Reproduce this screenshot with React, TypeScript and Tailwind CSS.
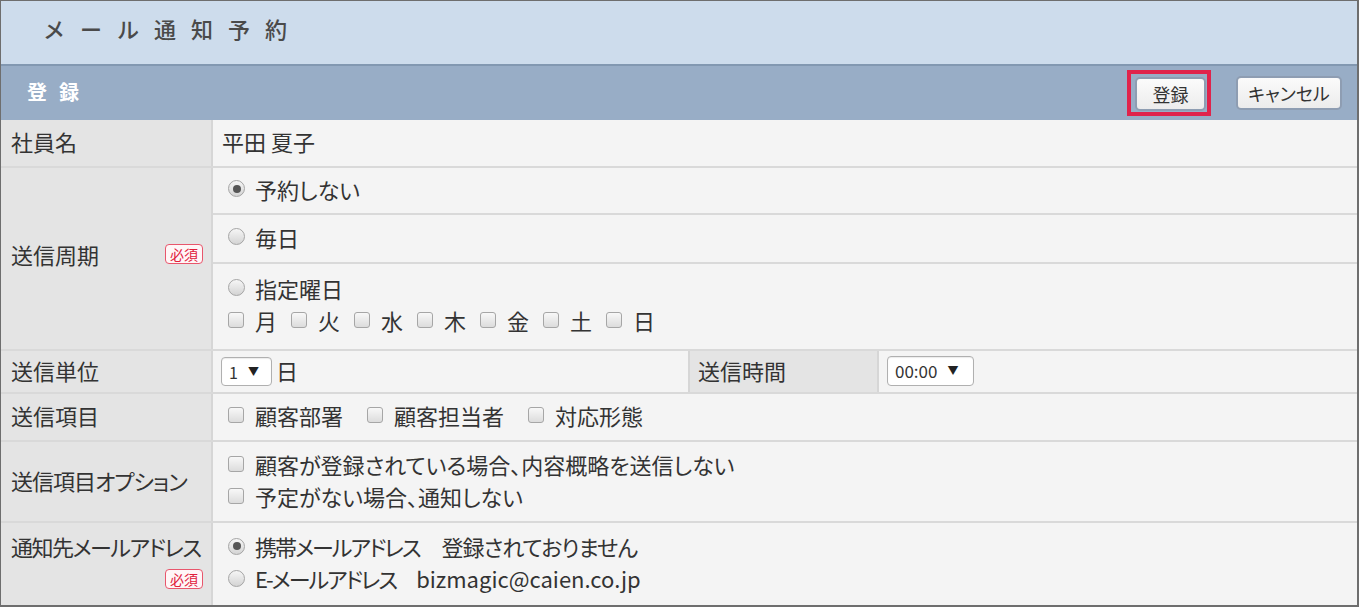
import type { ReactNode } from 'react';

function Radio({ checked = false }: { checked?: boolean }) {
  return (
    <span className="inline-flex w-[17px] h-[17px] flex-none items-center justify-center rounded-full border border-[#a5a5a5] bg-linear-to-b from-[#f6f6f6] to-[#d4d4d4]">
      {checked && <span className="w-[8px] h-[8px] rounded-full bg-[#555]" />}
    </span>
  );
}

function Check() {
  return (
    <span className="inline-block w-[16px] h-[16px] flex-none rounded-[3px] border border-[#a6a6a6] bg-linear-to-b from-[#f8f8f8] to-[#dcdcdc]" />
  );
}

function Badge() {
  return (
    <span className="inline-flex items-center h-[20px] px-[4px] rounded-[4px] border border-[#e8566c] bg-[#fff6f7] text-[14px] leading-none text-[#e0203c]">
      必須
    </span>
  );
}

function Label({ children, className = '' }: { children: ReactNode; className?: string }) {
  return (
    <div className={`w-[212px] flex-none bg-[#e4e4e4] border-r-2 border-[#d6d6d6] pl-[10px] pr-[8px] pb-[4px] ${className}`}>
      {children}
    </div>
  );
}

function Select({ value, className = '' }: { value: string; className?: string }) {
  return (
    <span className={`inline-flex items-center bg-white border border-[#b0b0b0] rounded-[4px] shadow-[inset_0_1px_1px_rgba(0,0,0,0.08)] ${className}`}>
      <span>{value}</span>
      <span className="ml-[10px] text-[11px] text-[#222]">▼</span>
    </span>
  );
}

const days = ['月', '火', '水', '木', '金', '土', '日'];

export default function App() {
  return (
    <div className="w-[1361px] h-[610px] bg-white font-['Noto_Sans_CJK_JP',sans-serif] text-[#333]">
      <div className="w-[1359px] h-[607px] flex flex-col border-t border-l border-r-2 border-b-2 border-[#6e6e6e]">
        {/* Header */}
        <div className="h-[65px] flex-none bg-[#cddcec] border-b-2 border-[#8298b1] pl-[42px] pt-[10px]">
          <span className="text-[22px] leading-[34px] tracking-[15px] font-medium text-[#4a4a4a]">メール通知予約</span>
        </div>

        {/* Section bar */}
        <div className="h-[54px] flex-none bg-[#98adc6] flex items-center justify-between pl-[26px] pr-[15px]">
          <span className="text-[20px] font-bold tracking-[12px] text-white pb-[2px]">登録</span>
          <div className="flex items-center gap-[25px]">
            <div className="border-4 border-[#e0234b] pl-[4px] pr-[1px] pt-[3px] pb-[1px]">
              <button className="w-[71px] h-[34px] rounded-[5px] border-2 border-[#8e9db2] bg-linear-to-b from-[#fbfbfb] to-[#ececec] text-[18px] leading-none text-[#333]">
                登録
              </button>
            </div>
            <button className="w-[106px] h-[34px] rounded-[5px] border-2 border-[#8e9db2] bg-linear-to-b from-[#fbfbfb] to-[#ececec] text-[18px] leading-none text-[#333] [font-feature-settings:'palt']">
              キャンセル
            </button>
          </div>
        </div>

        <div className="flex-1 flex flex-col text-[22px] leading-[32px] bg-[#f4f4f4] [font-feature-settings:'palt']">
          {/* 社員名 */}
          <div className="h-[48px] flex-none flex border-b-2 border-[#d9d9d9]">
            <Label className="flex items-center">社員名</Label>
            <div className="flex-1 flex items-center pl-[9px] pb-[4px]">平田 夏子</div>
          </div>

          {/* 送信周期 */}
          <div className="h-[183px] flex-none flex border-b-2 border-[#d9d9d9]">
            <Label className="flex items-center justify-between pb-[10px]">
              <span>送信周期</span>
              <Badge />
            </Label>
            <div className="flex-1 flex flex-col">
              <div className="h-[47px] flex-none flex items-center gap-[10px] pl-[15px] pb-[4px] border-b-2 border-[#d9d9d9]">
                <Radio checked />
                <span>予約しない</span>
              </div>
              <div className="h-[49px] flex-none flex items-center gap-[10px] pl-[15px] pb-[4px] border-b-2 border-[#d9d9d9]">
                <Radio />
                <span>毎日</span>
              </div>
              <div className="flex-1 flex flex-col justify-center pl-[15px] pb-[6px]">
                <div className="flex items-center gap-[10px]">
                  <Radio />
                  <span>指定曜日</span>
                </div>
                <div className="flex items-center">
                  {days.map((d) => (
                    <span key={d} className="flex items-center gap-[11px] mr-[14px]">
                      <Check />
                      <span>{d}</span>
                    </span>
                  ))}
                </div>
              </div>
            </div>
          </div>

          {/* 送信単位 / 送信時間 */}
          <div className="h-[43px] flex-none flex border-b-2 border-[#d9d9d9]">
            <Label className="flex items-center pb-[2px]">送信単位</Label>
            <div className="w-[477px] flex-none flex items-center pl-[8px] border-r-2 border-[#d6d6d6]">
              <Select value="1" className="w-[51px] h-[29px] px-[7px] text-[16px] leading-none" />
              <span className="ml-[4px] pb-[3px]">日</span>
            </div>
            <div className="w-[189px] flex-none flex items-center pl-[8px] pb-[3px] bg-[#e4e4e4] border-r-2 border-[#d6d6d6]">送信時間</div>
            <div className="flex-1 flex items-center pl-[8px] pb-[2px]">
              <Select value="00:00" className="w-[87px] h-[30px] px-[7px] text-[17px] leading-none" />
            </div>
          </div>

          {/* 送信項目 */}
          <div className="h-[48px] flex-none flex border-b-2 border-[#d9d9d9]">
            <Label className="flex items-center">送信項目</Label>
            <div className="flex-1 flex items-center pl-[15px] pb-[4px]">
              {['顧客部署', '顧客担当者', '対応形態'].map((t) => (
                <span key={t} className="flex items-center gap-[11px] mr-[24px]">
                  <Check />
                  <span>{t}</span>
                </span>
              ))}
            </div>
          </div>

          {/* 送信項目オプション */}
          <div className="h-[81px] flex-none flex border-b-2 border-[#d9d9d9]">
            <Label className="flex items-center tracking-[-1px]">送信項目オプション</Label>
            <div className="flex-1 flex flex-col justify-center pl-[15px] pb-[4px]">
              <div className="flex items-center gap-[11px]">
                <Check />
                <span>顧客が登録されている場合、内容概略を送信しない</span>
              </div>
              <div className="flex items-center gap-[11px]">
                <Check />
                <span>予定がない場合、通知しない</span>
              </div>
            </div>
          </div>

          {/* 通知先メールアドレス */}
          <div className="flex-1 flex">
            <Label className="flex flex-col justify-center">
              <span className="whitespace-nowrap tracking-[-1.5px]">通知先メールアドレス</span>
              <span className="flex justify-end h-[32px] items-center pt-[2px]">
                <Badge />
              </span>
            </Label>
            <div className="flex-1 flex flex-col justify-center pl-[15px] pb-[4px]">
              <div className="flex items-center gap-[10px]">
                <Radio checked />
                <span className="tracking-[-2px]">携帯メールアドレス</span>
                <span className="ml-[12px] tracking-[-1px]">登録されておりません</span>
              </div>
              <div className="flex items-center gap-[10px]">
                <Radio />
                <span className="tracking-[-2px]">E-メールアドレス</span>
                <span className="ml-[10px]">bizmagic@caien.co.jp</span>
              </div>
            </div>
          </div>
        </div>
      </div>
    </div>
  );
}
